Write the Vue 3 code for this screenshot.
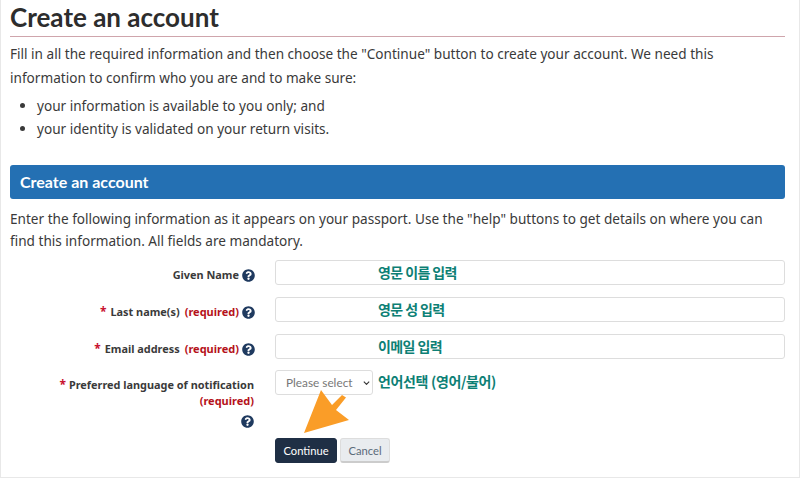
<script setup>
const rows = [
  { label: 'Given Name', req: false, note: '영문 이름 입력' },
  { label: 'Last name(s)', req: true, note: '영문 성 입력' },
  { label: 'Email address', req: true, note: '이메일 입력' },
]
</script>

<template>
  <div class="page">
    <h1 class="title">Create an account</h1>
    <p class="intro">Fill in all the required information and then choose the "Continue" button to create your account. We need this information to confirm who you are and to make sure:</p>
    <ul class="list">
      <li>your information is available to you only; and</li>
      <li>your identity is validated on your return visits.</li>
    </ul>
    <div class="panel">Create an account</div>
    <p class="lead">Enter the following information as it appears on your passport. Use the "help" buttons to get details on where you can find this information. All fields are mandatory.</p>
    <form class="form" @submit.prevent>
      <div v-for="r in rows" :key="r.label" class="row">
        <div class="label">
          <span v-if="r.req" class="star">*</span>
          <span>{{ r.label }}</span>
          <span v-if="r.req" class="req">(required)</span>
          <svg class="help" viewBox="0 0 512 512"><path fill="#1f3a5f" fill-rule="evenodd" d="M504 256c0 137-111 248-248 248S8 393 8 256 119 8 256 8s248 111 248 248zM262.700 90c-54.500 0-89.300 23-116.500 63.800-3.500 5.300-2.400 12.400 2.700 16.300l34.700 26.300c5.200 3.900 12.600 3 16.700-2.100 17.900-22.700 30.100-35.800 57.300-35.800 20.400 0 45.700 13.100 45.700 32.900 0 15-12.400 22.700-32.500 34-23.500 13.200-54.600 29.600-54.600 70.700V300c0 6.600 5.400 12 12 12h56c6.600 0 12-5.400 12-12v-1.300c0-28.400 83.100-29.600 83.100-106.700 0-58-60.200-102-116.600-102zM256 338c-25.400 0-46 20.600-46 46s20.600 46 46 46 46-20.600 46-46-20.600-46-46-46z"/></svg>
        </div>
        <div class="field">
          <input class="input" type="text" />
          <span class="note">{{ r.note }}</span>
        </div>
      </div>
      <div class="row lang">
        <div class="label stack">
          <div><span class="star">*</span> Preferred language of notification</div>
          <div class="req">(required)</div>
          <svg class="help" viewBox="0 0 512 512"><path fill="#1f3a5f" fill-rule="evenodd" d="M504 256c0 137-111 248-248 248S8 393 8 256 119 8 256 8s248 111 248 248zM262.700 90c-54.500 0-89.300 23-116.500 63.800-3.500 5.300-2.400 12.400 2.700 16.300l34.700 26.300c5.200 3.900 12.600 3 16.700-2.100 17.900-22.700 30.100-35.800 57.300-35.800 20.400 0 45.700 13.100 45.700 32.900 0 15-12.400 22.700-32.500 34-23.500 13.200-54.600 29.600-54.600 70.700V300c0 6.600 5.400 12 12 12h56c6.600 0 12-5.400 12-12v-1.300c0-28.400 83.100-29.600 83.100-106.700 0-58-60.200-102-116.600-102zM256 338c-25.400 0-46 20.600-46 46s20.600 46 46 46 46-20.600 46-46-20.600-46-46-46z"/></svg>
        </div>
        <div class="field langfield">
          <div class="selectwrap">
            <select class="select"><option>Please select</option></select>
            <svg class="chev" viewBox="0 0 10 6"><path d="M1 1l4 4 4-4" fill="none" stroke="#333" stroke-width="1.700"/></svg>
          </div>
          <span class="langnote">언어선택 (영어/불어)</span>
        </div>
      </div>
      <div class="actions">
        <button class="btn primary" type="button">Continue</button>
        <button class="btn cancel" type="button">Cancel</button>
        <svg class="arrow" viewBox="300 388 54 50"><path fill="#fa9d28" d="M304 433L321 390L332 405L342 395L346 397.500L336 410L349 420Z"/></svg>
      </div>
    </form>
  </div>
</template>

<style scoped>
.page {
  box-sizing: border-box;
  width: 800px;
  height: 478px;
  padding: 0 14px 0 9px;
  border: 1px solid #e8e8e8;
  border-top: 0;
  background: #fff;
  font-family: "Noto Sans", "Open Sans", sans-serif;
  font-size: 13.6px;
  line-height: 24px;
  color: #3a3a3a;
  overflow: hidden;
  position: relative;
}
.title {
  margin: 0 0 5px;
  height: 37px;
  line-height: 34px;
  font-family: "Lato", sans-serif;
  font-size: 26px;
  font-weight: 700;
  color: #2d2d2d;
  border-bottom: 1px solid #cfa5ac;
  box-sizing: border-box;
}
.intro { margin: 0; }
.list { margin: 4px 0 0; padding: 0 0 0 27px; }
.list li { line-height: 23px; }
.panel {
  box-sizing: border-box;
  margin-top: 25px;
  height: 34px;
  padding: 0 10px;
  line-height: 34px;
  background: #2470b3;
  border-radius: 3px;
  color: #fff;
  font-family: "Lato", sans-serif;
  font-size: 16px;
  font-weight: 700;
}
.lead { margin: 9px 0 0; line-height: 22px; }
.form { margin-top: 8px; }
.row { display: flex; height: 37px; }
.row:nth-child(3) { height: 36px; }
.label {
  box-sizing: border-box;
  width: 265px;
  padding-right: 36px;
  display: flex;
  justify-content: flex-end;
  align-items: center;
  height: 30px;
  gap: 4px;
  font-size: 10.9px;
  font-weight: 700;
  position: relative;
}
.star { color: #c8102e; font-size: 12px; }
.req { color: #b5121b; font-size: 11px; margin-left: 1px; }
.help { position: absolute; right: 20px; top: 9px; width: 13px; height: 13px; }
.field { flex: 1; position: relative; }
.input {
  box-sizing: border-box;
  display: block;
  width: 100%;
  height: 25px;
  border: 1px solid #ddd;
  border-radius: 3px;
  background: #fff;
}
.note {
  position: absolute;
  left: 103px;
  top: 0;
  font-family: "Noto Sans CJK KR", sans-serif;
  font-size: 14px;
  line-height: 24px;
  font-weight: 700;
  letter-spacing: -0.6px;
  color: #0d8075;
}
.lang { height: 68px; }
.stack {
  display: block;
  height: auto;
  text-align: right;
  padding-right: 21px;
  line-height: 16px;
  padding-top: 7px;
}
.stack .req { margin: 0; }
.stack .help { position: static; display: block; margin: 6px 0 0 auto; }
.langfield { display: flex; align-items: flex-start; gap: 5px; }
.selectwrap { position: relative; width: 98px; height: 25px; }
.select {
  box-sizing: border-box;
  display: block;
  width: 98px;
  height: 25px;
  border: 1px solid #ddd;
  border-radius: 3px;
  background: #fff;
  color: #777;
  font-family: "Lato", sans-serif;
  font-size: 11.8px;
  padding: 0 6px 0 10px;
  appearance: none;
}
.chev { position: absolute; left: 88px; top: 11px; width: 7px; height: 4px; pointer-events: none; }
.langnote {
  font-family: "Noto Sans CJK KR", sans-serif;
  font-size: 14px;
  line-height: 22px;
  font-weight: 700;
  letter-spacing: -0.35px;
  color: #0d8075;
}
.actions {
  margin-left: 265px;
  display: flex;
  gap: 3px;
  position: relative;
}
.btn {
  box-sizing: border-box;
  height: 25px;
  border-radius: 3px;
  font-family: "Lato", sans-serif;
  font-size: 11.2px;
  padding: 0;
}
.primary { width: 62px; background: #1f2f45; border: 1px solid #1f2f45; color: #fff; }
.cancel { width: 50px; background: #e9ecef; border: 1px solid #ddd; border-bottom: 2px solid #ccc; color: #5b6b7b; }
.arrow { position: absolute; left: 25px; top: -50px; width: 54px; height: 50px; }
</style>
